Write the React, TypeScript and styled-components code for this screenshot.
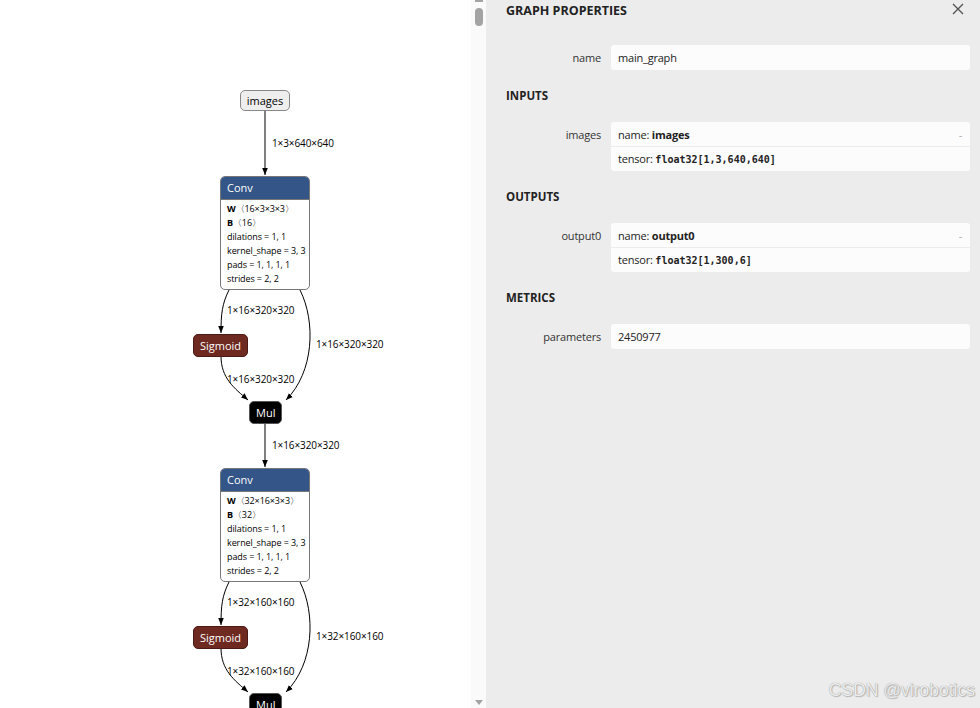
import React from 'react';
import styled, { createGlobalStyle } from 'styled-components';

const GlobalStyle = createGlobalStyle`
  html, body {
    margin: 0;
    padding: 0;
    background: #ffffff;
  }
  body {
    font-family: "Open Sans", "Noto Sans", sans-serif;
    overflow: hidden;
  }
`;

type Attr = { key: string; value: string; bold?: boolean };

type ConvProps = { x: number; y: number; weights: string; bias: string };

type Edge = { d: string };

type EdgeLabel = { x: number; y: number; text: string };

const conv = (y: number, weights: string, bias: string): ConvProps => ({ x: 220, y, weights, bias });

const convNodes = [conv(176, '16×3×3×3', '16'), conv(468, '32×16×3×3', '32')];

// Each block (Conv -> Sigmoid/Mul) repeats 292px lower
const blockEdges = (o: number): Edge[] => [
    { d: `M229,${290 + o} C222,${304 + o} 221,${314 + o} 221,${333 + o}` },
    { d: `M300,${290 + o} C316,${322 + o} 314,${372 + o} 286,${400 + o}` },
    { d: `M221,${356 + o} C221,${378 + o} 234,${388 + o} 248,${400 + o}` },
    { d: `M265,${424 + o} L265,${467 + o}` },
];

const edges: Edge[] = [{ d: 'M265,111 L265,175' }, ...blockEdges(0), ...blockEdges(292)];

const blockLabels = (o: number, shape: string): EdgeLabel[] => [
    { x: 227, y: 310 + o, text: shape },
    { x: 316, y: 344 + o, text: shape },
    { x: 227, y: 379 + o, text: shape },
];

const labels: EdgeLabel[] = [
    { x: 272, y: 143, text: '1×3×640×640' },
    ...blockLabels(0, '1×16×320×320'),
    { x: 272, y: 445, text: '1×16×320×320' },
    ...blockLabels(292, '1×32×160×160'),
];

function ConvNode({ x, y, weights, bias }: ConvProps) {
    const attrs: Attr[] = [
        { key: 'W', value: `〈${weights}〉`, bold: true },
        { key: 'B', value: `〈${bias}〉`, bold: true },
        { key: 'dilations', value: ' = 1, 1' },
        { key: 'kernel_shape', value: ' = 3, 3' },
        { key: 'pads', value: ' = 1, 1, 1, 1' },
        { key: 'strides', value: ' = 2, 2' },
    ];
    return (
        <ConvBox style={{ left: x, top: y }}>
            <ConvHeader>Conv</ConvHeader>
            <ConvBody>
                {attrs.map((a) => (
                    <AttrLine key={a.key}>
                        {a.bold ? <b>{a.key}</b> : a.key}
                        {a.value}
                    </AttrLine>
                ))}
            </ConvBody>
        </ConvBox>
    );
}

function Graph() {
    return (
        <Canvas>
            <EdgeLayer width="471" height="708">
                <defs>
                    <marker id="arrow" viewBox="0 0 10 10" refX="10" refY="5" markerWidth="7" markerHeight="7" orient="auto">
                        <path d="M0,1 L10,5 L0,9 z" fill="#000" />
                    </marker>
                </defs>
                {edges.map((e, i) => (
                    <path key={i} d={e.d} fill="none" stroke="#000" strokeWidth="1" markerEnd="url(#arrow)" />
                ))}
            </EdgeLayer>

            {labels.map((l, i) => (
                <EdgeText key={i} style={{ left: l.x, top: l.y - 7 }}>
                    {l.text}
                </EdgeText>
            ))}

            <InputNode style={{ left: 240, top: 90 }}>images</InputNode>

            {convNodes.map((c) => (
                <ConvNode key={c.y} {...c} />
            ))}

            <OpNode $tone="activation" style={{ left: 193, top: 334 }}>Sigmoid</OpNode>
            <OpNode $tone="math" style={{ left: 249, top: 401 }}>Mul</OpNode>
            <OpNode $tone="activation" style={{ left: 193, top: 626 }}>Sigmoid</OpNode>
            <OpNode $tone="math" style={{ left: 249, top: 693 }}>Mul</OpNode>
        </Canvas>
    );
}

function Sidebar() {
    return (
        <Panel>
            <TitleBar>
                <Title>GRAPH PROPERTIES</Title>
                <CloseButton aria-label="close">
                    <svg width="12" height="12" viewBox="0 0 12 12">
                        <path d="M1,1 L11,11 M11,1 L1,11" stroke="#555" strokeWidth="1.4" />
                    </svg>
                </CloseButton>
            </TitleBar>

            <Row $first>
                <RowLabel>name</RowLabel>
                <ValueBox>
                    <ValueLine>main_graph</ValueLine>
                </ValueBox>
            </Row>

            <SectionHeader>INPUTS</SectionHeader>
            <Row>
                <RowLabel>images</RowLabel>
                <ValueBox>
                    <ValueLine>
                        <span>
                            name: <b>images</b>
                        </span>
                        <Expander>-</Expander>
                    </ValueLine>
                    <ValueLine $divided>
                        <span>
                            tensor: <Code>float32[1,3,640,640]</Code>
                        </span>
                    </ValueLine>
                </ValueBox>
            </Row>

            <SectionHeader>OUTPUTS</SectionHeader>
            <Row>
                <RowLabel>output0</RowLabel>
                <ValueBox>
                    <ValueLine>
                        <span>
                            name: <b>output0</b>
                        </span>
                        <Expander>-</Expander>
                    </ValueLine>
                    <ValueLine $divided>
                        <span>
                            tensor: <Code>float32[1,300,6]</Code>
                        </span>
                    </ValueLine>
                </ValueBox>
            </Row>

            <SectionHeader>METRICS</SectionHeader>
            <Row>
                <RowLabel>parameters</RowLabel>
                <ValueBox>
                    <ValueLine>2450977</ValueLine>
                </ValueBox>
            </Row>

            <Watermark>CSDN @virobotics</Watermark>
        </Panel>
    );
}

export default function App() {
    return (
        <>
            <GlobalStyle />
            <Page>
                <Graph />
                <ScrollTrack>
                    <ScrollCap />
                    <ScrollThumb />
                    <ScrollArrow />
                </ScrollTrack>
                <Sidebar />
            </Page>
        </>
    );
}

const Page = styled.div`
  display: flex;
  width: 980px;
  height: 708px;
  overflow: hidden;
`;

const Canvas = styled.div`
  position: relative;
  width: 471px;
  height: 708px;
  flex: none;
  background: #fff;
  overflow: hidden;
  font-family: "Open Sans", "Noto Sans", sans-serif;
`;

const EdgeLayer = styled.svg`
  position: absolute;
  left: 0;
  top: 0;
`;

const EdgeText = styled.div`
  position: absolute;
  font-size: 10px;
  line-height: 14px;
  color: #000;
  white-space: nowrap;
  letter-spacing: -0.1px;
`;

const InputNode = styled.div`
  position: absolute;
  box-sizing: border-box;
  width: 50px;
  height: 21px;
  border: 1px solid #888;
  border-radius: 5px;
  background: #eeeeee;
  color: #000;
  font-size: 11px;
  line-height: 19px;
  text-align: center;
`;

const OpNode = styled.div<{ $tone: 'activation' | 'math' }>`
  position: absolute;
  box-sizing: border-box;
  height: 23px;
  padding: 0 6px;
  border-radius: 5px;
  border: 1px solid ${(p) => (p.$tone === 'activation' ? '#4a1a14' : '#555')};
  background: ${(p) => (p.$tone === 'activation' ? '#6e2921' : '#000')};
  color: #fff;
  font-size: 11px;
  line-height: 21px;
  white-space: nowrap;
`;

const ConvBox = styled.div`
  position: absolute;
  box-sizing: border-box;
  width: 90px;
  height: 114px;
  border: 1px solid #777;
  border-radius: 5px;
  background: #fff;
  overflow: hidden;
`;

const ConvHeader = styled.div`
  height: 22px;
  padding-left: 6px;
  background: #335588;
  border-bottom: 1px solid #777;
  color: #fff;
  font-size: 11px;
  line-height: 22px;
`;

const ConvBody = styled.div`
  padding: 2px 0 0 6px;
`;

const AttrLine = styled.div`
  font-size: 9px;
  line-height: 14px;
  color: #000;
  white-space: nowrap;
  letter-spacing: -0.1px;
`;

const ScrollTrack = styled.div`
  position: relative;
  width: 15px;
  flex: none;
  background: #fafafa;
  display: flex;
  flex-direction: column;
  align-items: center;
`;

const ScrollCap = styled.div`
  width: 8px;
  height: 2px;
  margin-left: 1px;
  background: #a3a3a3;
`;

const ScrollThumb = styled.div`
  width: 8px;
  height: 18px;
  margin: 6px 0 0 1px;
  border-radius: 4px;
  background: #a3a3a3;
`;

const ScrollArrow = styled.div`
  margin: auto 0 3px 1px;
  width: 0;
  height: 0;
  border-left: 4px solid transparent;
  border-right: 4px solid transparent;
  border-top: 5px solid #a3a3a3;
`;

const Panel = styled.div`
  position: relative;
  flex: 1;
  background: #ececec;
  padding: 0 10px 0 20px;
  color: #222;
  font-size: 11px;
`;

const TitleBar = styled.div`
  display: flex;
  align-items: center;
  justify-content: space-between;
  height: 20px;
`;

const Title = styled.div`
  font-weight: 700;
  font-size: 12.5px;
  color: #222;
`;

const CloseButton = styled.div`
  display: flex;
  margin-right: 6px;
  margin-top: -2px;
`;

const SectionHeader = styled.div`
  margin: 16px 0;
  height: 20px;
  line-height: 20px;
  font-weight: 700;
  font-size: 11.5px;
  color: #222;
`;

const Row = styled.div<{ $first?: boolean }>`
  display: grid;
  grid-template-columns: 95px 1fr;
  column-gap: 10px;
  margin-top: ${(p) => (p.$first ? '25px' : '0')};
`;

const RowLabel = styled.div`
  text-align: right;
  line-height: 25px;
  color: #333;
  letter-spacing: -0.2px;
`;

const ValueBox = styled.div`
  background: #fcfcfc;
  border-radius: 3px;
  padding-bottom: 1px;
  overflow: hidden;
`;

const ValueLine = styled.div<{ $divided?: boolean }>`
  box-sizing: border-box;
  display: flex;
  justify-content: space-between;
  align-items: center;
  height: 24px;
  padding: 0 8px 0 7px;
  border-top: ${(p) => (p.$divided ? '1px solid #ececec' : 'none')};
  color: #222;
  letter-spacing: -0.2px;
  b {
    font-weight: 700;
  }
`;

const Code = styled.span`
  font-family: "DejaVu Sans Mono", "Liberation Mono", monospace;
  font-size: 10px;
  font-weight: 700;
  letter-spacing: 0;
`;

const Expander = styled.span`
  color: #aaa;
`;

const Watermark = styled.div`
  position: absolute;
  right: 5px;
  bottom: 7px;
  font-family: "Liberation Sans", Arial, sans-serif;
  font-size: 17.5px;
  color: #ededed;
  text-shadow: 0 0 1px #888, 1px 1px 1px #bbb;
`;
